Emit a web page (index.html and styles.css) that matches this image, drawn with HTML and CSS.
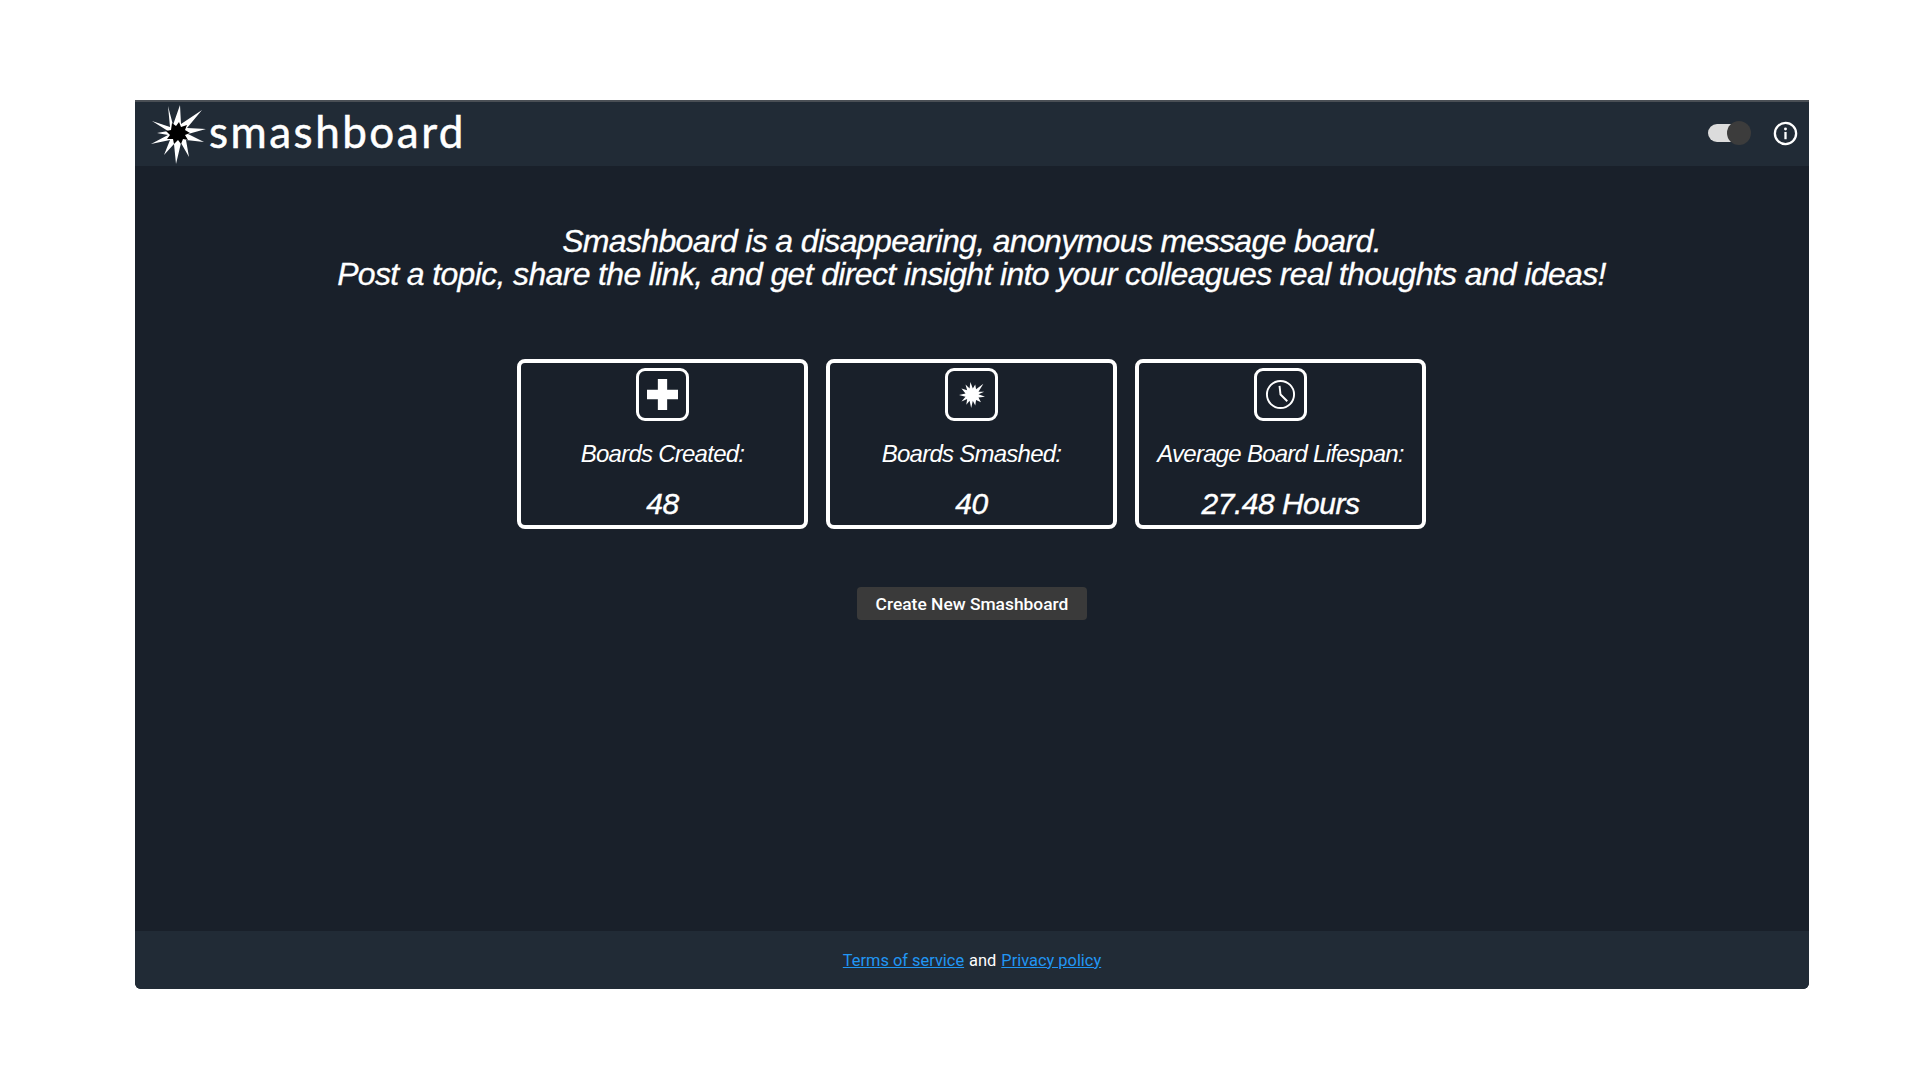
FILE: index.html
```html
<!DOCTYPE html>
<html lang="en">

<head>
  <meta charset="UTF-8">
  <meta name="viewport" content="width=device-width, initial-scale=1.0">
  <title>Smashboard</title>
  <link rel="stylesheet" href="styles.css">
</head>

<body>

  <div class="window">
    <header class="topbar">
      <div class="brand">
        <svg class="brand-mark" viewBox="-30 -30 60 60" aria-hidden="true">
          <polygon fill="#fff" points="-10,-28 -5,-9 2,-29 3,-10 24,-24 9,-6 28,-5 10,0 26,8 8,6 11,23 3,9 -2,30 -4,10 -14,21 -8,6 -27,10 -10,1 -21,-1 -10,-3 -26,-13 -8,-7"/>
          <polygon fill="#000" points="-6,-11 -2,-8 1,-12 3,-7 9,-9 7,-4 12,-1 7,1 10,6 5,5 3,10 0,6 -4,10 -5,5 -11,5 -8,1 -12,-3 -7,-4"/>
        </svg>
        <span class="brand-name">smashboard</span>
      </div>
      <div class="topbar-tools">
        <div class="toggle"><span class="toggle-knob"></span></div>
        <svg class="info-icon" viewBox="0 0 24 24" aria-hidden="true">
          <circle cx="12" cy="12" r="10.2" fill="none" stroke="#fff" stroke-width="2.2"/>
          <rect x="10.9" y="10.5" width="2.2" height="7" fill="#fff"/>
          <circle cx="12" cy="7.6" r="1.4" fill="#fff"/>
        </svg>
      </div>
    </header>

    <main class="content">
      <h1 class="intro">Smashboard is a disappearing, anonymous message board.<br>Post a topic, share the link, and get direct insight into your colleagues real thoughts and ideas!</h1>

      <div class="stats">
        <div class="stat-card">
          <div class="stat-icon">
            <svg viewBox="1 1 30 30" aria-hidden="true">
              <path fill="#fff" d="M11.5 1h9v10.5H31v9H20.500V31h-9V20.500H1v-9h10.500z"/>
            </svg>
          </div>
          <div class="stat-label">Boards Created:</div>
          <div class="stat-value">48</div>
        </div>
        <div class="stat-card">
          <div class="stat-icon">
            <svg class="burst" viewBox="0 0 32 32" aria-hidden="true">
              <polygon fill="#fff" points="14,0 17,8 20,3 21,9 30,2 24,12 31,12 24,15 32,18 24,19 27,25 21,22 20,29 17,23 15,32 13,23 9,28 10,21 3,24 8,18 0,16 8,14 3,8 10,10 8,3 13,8"/>
            </svg>
          </div>
          <div class="stat-label">Boards Smashed:</div>
          <div class="stat-value">40</div>
        </div>
        <div class="stat-card">
          <div class="stat-icon">
            <svg viewBox="0 0 32 32" aria-hidden="true">
              <circle cx="16" cy="16" r="14" fill="none" stroke="#fff" stroke-width="2"/>
              <path fill="none" stroke="#fff" stroke-width="2" d="M15 7l1 9 7 7"/>
            </svg>
          </div>
          <div class="stat-label">Average Board Lifespan:</div>
          <div class="stat-value">27.48 Hours</div>
        </div>
      </div>

      <button class="create-btn" type="button">Create New Smashboard</button>
    </main>

    <footer class="footer">
      <a href="#">Terms of service</a> and <a href="#">Privacy policy</a>
    </footer>
  </div>

</body>

</html>
```

FILE: styles.css
```css
* {
  box-sizing: border-box;
}

body {
  margin: 0;
  padding: 100px 111px 91px 135px;
  height: 1080px;
  background-color: #fff;
  font-family: "Liberation Sans", Arial, sans-serif;
  color: #fff;
}

.window {
  display: flex;
  flex-direction: column;
  height: 100%;
  background-color: #19202a;
  border-top: 2px solid #4a4f55;
  border-radius: 0 0 6px 6px;
  overflow: hidden;
}

/* top bar */
.topbar {
  display: flex;
  align-items: center;
  justify-content: space-between;
  height: 64px;
  padding: 0 11px 2px 13px;
  background-color: #212b36;
}

.brand {
  display: flex;
  align-items: center;
}

.brand-mark {
  width: 60px;
  height: 60px;
  margin-top: 2px;
}

.brand-name {
  margin: 0 0 4px 1px;
  font-family: Lato, sans-serif;
  font-size: 44px;
  font-weight: 400;
  line-height: 1;
  letter-spacing: 2.5px;
  -webkit-text-stroke: 0.5px #fff;
}

.topbar-tools {
  display: flex;
  align-items: center;
  gap: 28px;
}

.toggle {
  position: relative;
  width: 37px;
  height: 18px;
  background-color: #dcdcdc;
  border-radius: 9px;
}

.toggle-knob {
  position: absolute;
  top: -3px;
  right: -6px;
  width: 24px;
  height: 24px;
  background-color: #3c3c3c;
  border-radius: 50%;
}

.info-icon {
  width: 25px;
  height: 25px;
}

/* main area */
.content {
  flex: 1;
  display: flex;
  flex-direction: column;
  align-items: center;
}

.intro {
  margin: 59px 0 0 -1px;
  font-size: 32px;
  font-weight: 400;
  font-style: italic;
  line-height: 33px;
  letter-spacing: -0.65px;
  text-align: center;
  white-space: nowrap;
  -webkit-text-stroke: 0.3px #fff;
}

.stats {
  display: flex;
  gap: 18px;
  margin: 68px 0 0 -1px;
}

.stat-card {
  display: flex;
  flex-direction: column;
  align-items: center;
  width: 291px;
  height: 170px;
  padding-top: 5px;
  border: 4px solid #fff;
  border-radius: 8px;
}

.stat-icon {
  display: flex;
  align-items: center;
  justify-content: center;
  width: 53px;
  height: 53px;
  border: 3px solid #fff;
  border-radius: 9px;
}

.stat-icon svg {
  width: 31px;
  height: 31px;
}

.stat-icon .burst {
  width: 26px;
  height: 26px;
}

.stat-label {
  margin-top: 19px;
  font-size: 24px;
  font-style: italic;
  line-height: 28px;
  letter-spacing: -0.75px;
}

.stat-value {
  margin-top: 18px;
  font-size: 30px;
  font-style: italic;
  line-height: 36px;
  letter-spacing: -0.5px;
  -webkit-text-stroke: 0.4px #fff;
}

.create-btn {
  width: 230px;
  height: 33px;
  margin-top: 58px;
  padding: 0;
  background-color: #3a3a3a;
  border: 0;
  border-radius: 4px;
  color: #fff;
  font-family: Roboto, sans-serif;
  font-size: 17.4px;
  font-weight: 500;
}

/* footer */
.footer {
  display: flex;
  align-items: center;
  justify-content: center;
  gap: 5px;
  height: 58px;
  background-color: #212b36;
  font-family: Roboto, sans-serif;
  font-size: 16.4px;
}

.footer a {
  color: #2196f3;
}
```
